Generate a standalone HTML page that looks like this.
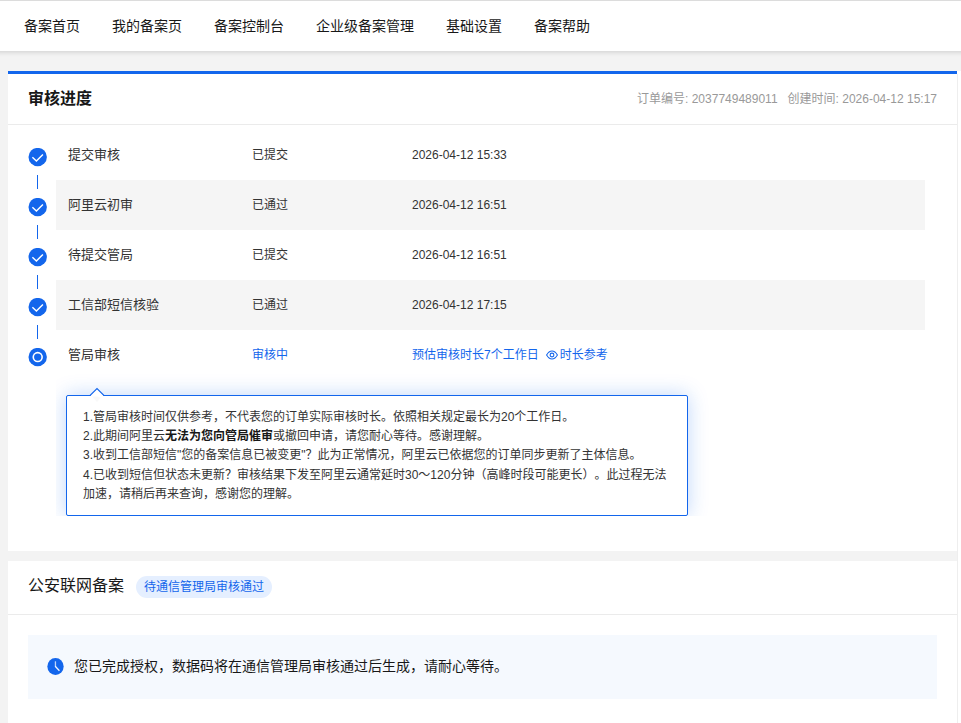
<!DOCTYPE html>
<html lang="zh-CN">
<head>
<meta charset="utf-8">
<title>备案 - 审核进度</title>
<style>
*{box-sizing:border-box;margin:0;padding:0}
html,body{width:961px;height:723px;overflow:hidden}
body{position:relative;background:#f3f3f3;font-family:"Liberation Sans","Noto Sans CJK SC",sans-serif;font-size:12px;color:#333;text-spacing-trim:space-all}
.abs{position:absolute}
.topline{left:0;top:0;width:961px;height:1px;background:#dcdcdc}
.nav{left:-20px;top:1px;width:1001px;height:50px;background:#fff;box-shadow:0 1px 5px rgba(0,0,0,.16)}
.nav a{position:absolute;top:0;height:50px;line-height:51px;font-size:14px;color:#181818;white-space:nowrap;text-decoration:none}
.rightstrip{left:957px;top:71px;width:4px;height:652px;background:linear-gradient(#eee,#eee) 0 3px/1px 100% no-repeat #fff}
.card{left:8px;width:949px;background:#fff}
.card1{top:71px;height:480px;border-top:3px solid #1366ec}
.card2{top:561px;height:170px}
.hd{position:absolute;left:0;width:949px;border-bottom:1px solid #ebebeb}
.title{position:absolute;left:20px;font-size:16px;color:#181818;white-space:nowrap}
.meta{position:absolute;right:20px;top:0;height:50px;line-height:51px;font-size:12px;color:#999;white-space:nowrap}
.meta span+span{margin-left:10px}
.row{position:absolute;left:48px;width:869px;height:50px}
.row.g{background:#f5f5f5}
.row span{position:absolute;top:0;height:50px;line-height:49px;white-space:nowrap}
.row .c1{left:12px;font-size:13px;color:#333}
.row .c2{left:196px;font-size:12px;color:#333;line-height:51px}
.row .c3{left:356px;font-size:12px;color:#333;line-height:51px}
.blue{color:#1366ec !important}
.ico{position:absolute;left:20px;width:20px;height:20px}
.vline{position:absolute;left:29px;width:1px;height:14px;background:#1366ec}
.clip{position:absolute;left:48px;top:282px;width:901px;height:160px;overflow:hidden}
.tip{position:absolute;left:10px;top:39px;width:622px;height:121px;border:1px solid #1366ec;border-radius:2px;background:#fff;box-shadow:0 0 20px rgba(19,102,236,.27);padding:12px 16px 0 16px;font-size:12px;line-height:19.2px;color:#333;white-space:nowrap}
.tip b{font-weight:bold;color:#181818}
.arrow{position:absolute;left:33px;top:30px;width:16px;height:17px}
.pill{position:absolute;left:128px;top:15px;height:22px;line-height:23px;padding:0 8px;border-radius:11px;background:#e5efff;color:#1366ec;font-size:12px;white-space:nowrap}
.info{position:absolute;left:20px;top:74px;width:909px;height:64px;background:#f5f9fe}
.info .txt{position:absolute;left:46px;top:0;height:64px;line-height:63px;font-size:14px;color:#181818;white-space:nowrap}
</style>
</head>
<body>
<div class="abs nav">
  <a style="left:44px">备案首页</a>
  <a style="left:132px">我的备案页</a>
  <a style="left:234px">备案控制台</a>
  <a style="left:336px">企业级备案管理</a>
  <a style="left:466px">基础设置</a>
  <a style="left:554px">备案帮助</a>
</div>
<div class="abs topline"></div>
<div class="abs rightstrip"></div>

<div class="abs card card1">
  <div class="hd" style="top:0;height:51px">
    <div class="title" style="top:0;height:50px;line-height:50px;font-weight:bold">审核进度</div>
    <div class="meta"><span>订单编号: 2037749489011</span><span>创建时间: 2026-04-12 15:17</span></div>
  </div>

  <div class="row" style="top:56px"><span class="c1">提交审核</span><span class="c2">已提交</span><span class="c3">2026-04-12 15:33</span></div>
  <div class="row g" style="top:106px"><span class="c1">阿里云初审</span><span class="c2">已通过</span><span class="c3">2026-04-12 16:51</span></div>
  <div class="row" style="top:156px"><span class="c1">待提交管局</span><span class="c2">已提交</span><span class="c3">2026-04-12 16:51</span></div>
  <div class="row g" style="top:206px"><span class="c1">工信部短信核验</span><span class="c2">已通过</span><span class="c3">2026-04-12 17:15</span></div>
  <div class="row" style="top:256px"><span class="c1">管局审核</span><span class="c2 blue">审核中</span><span class="c3 blue">预估审核时长7个工作日<svg style="display:inline-block;vertical-align:-1px;margin:0 2px 0 7px" width="12" height="10" viewBox="0 0 12 10"><path d="M0.6 5 C2.2 2.2 4 1 6 1 S9.8 2.2 11.4 5 C9.8 7.8 8 9 6 9 S2.2 7.8 0.6 5Z" fill="none" stroke="#1366ec" stroke-width="1.1"/><circle cx="6" cy="5" r="1.9" fill="none" stroke="#1366ec" stroke-width="1.1"/></svg>时长参考</span></div>

  <!-- step icons -->
  <svg class="ico" style="top:74px" viewBox="0 0 20 20"><circle cx="9.7" cy="9.1" r="9.2" fill="#1366ec"/><path d="M4.4 9.3 L8.4 13.1 L14.9 6.4" fill="none" stroke="#fff" stroke-width="1.45" stroke-linejoin="miter"/></svg>
  <div class="vline" style="top:101px"></div>
  <svg class="ico" style="top:124px" viewBox="0 0 20 20"><circle cx="9.7" cy="9.1" r="9.2" fill="#1366ec"/><path d="M4.4 9.3 L8.4 13.1 L14.9 6.4" fill="none" stroke="#fff" stroke-width="1.45" stroke-linejoin="miter"/></svg>
  <div class="vline" style="top:151px"></div>
  <svg class="ico" style="top:174px" viewBox="0 0 20 20"><circle cx="9.7" cy="9.1" r="9.2" fill="#1366ec"/><path d="M4.4 9.3 L8.4 13.1 L14.9 6.4" fill="none" stroke="#fff" stroke-width="1.45" stroke-linejoin="miter"/></svg>
  <div class="vline" style="top:201px"></div>
  <svg class="ico" style="top:224px" viewBox="0 0 20 20"><circle cx="9.7" cy="9.1" r="9.2" fill="#1366ec"/><path d="M4.4 9.3 L8.4 13.1 L14.9 6.4" fill="none" stroke="#fff" stroke-width="1.45" stroke-linejoin="miter"/></svg>
  <div class="vline" style="top:251px"></div>
  <svg class="ico" style="top:274px" viewBox="0 0 20 20"><circle cx="9.7" cy="9.1" r="9.2" fill="#1366ec"/><circle cx="9.7" cy="9.1" r="5.25" fill="#fff"/><circle cx="9.7" cy="9.1" r="3.65" fill="#1366ec"/></svg>

  <!-- tooltip -->
  <div class="clip">
  <div class="tip">1.管局审核时间仅供参考，不代表您的订单实际审核时长。依照相关规定最长为20个工作日。<br>2.此期间阿里云<b>无法为您向管局催审</b>或撤回申请，请您耐心等待。感谢理解。<br>3.收到工信部短信"您的备案信息已被变更"？此为正常情况，阿里云已依据您的订单同步更新了主体信息。<br>4.已收到短信但状态未更新？审核结果下发至阿里云通常延时30～120分钟（高峰时段可能更长）。此过程无法<br>加速，请稍后再来查询，感谢您的理解。</div>
  <svg class="arrow" viewBox="0 0 16 17"><path d="M2.8 10.6 L8 16 L11.8 11.8 L9 10.6Z" fill="#000" fill-opacity=".028"/><path d="M1.5 10 L14.5 10 L14.5 9.5 L8 3 L1.5 9.5Z" fill="#fff"/><path d="M0.4 9.5 L1.1 9.5 L8 2.5 L14.9 9.5 L15.6 9.5" fill="none" stroke="#1366ec" stroke-width="1.15" stroke-linejoin="miter"/></svg>
  </div>
</div>

<div class="abs card card2">
  <div class="hd" style="top:0;height:54px">
    <div class="title" style="top:0;height:53px;line-height:50px">公安联网备案</div>
    <div class="pill">待通信管理局审核通过</div>
  </div>
  <div class="info">
    <svg style="position:absolute;left:19.1px;top:22.8px" width="17" height="17" viewBox="0 0 17 17"><ellipse cx="8.5" cy="8.5" rx="8.15" ry="8.5" fill="#1366ec"/><path d="M8.45 3.3 L8.45 8.7" fill="none" stroke="#fff" stroke-opacity=".72" stroke-width="1.3"/><path d="M8.2 8.2 L12.4 12.7" fill="none" stroke="#fff" stroke-opacity=".95" stroke-width="1.3"/></svg>
    <div class="txt">您已完成授权，数据码将在通信管理局审核通过后生成，请耐心等待。</div>
  </div>
</div>
</body>
</html>
